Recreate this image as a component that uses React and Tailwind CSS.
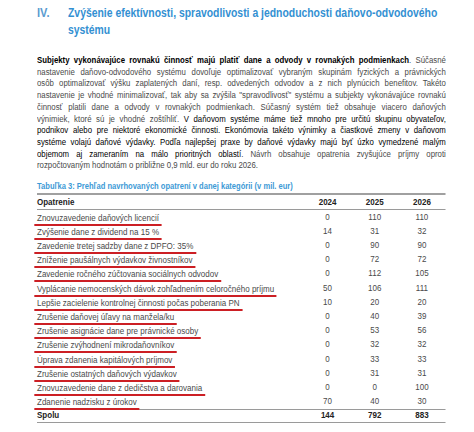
import React from "react";

const rows = [
  ["Znovuzavedenie daňových licencií", "0", "110", "110"],
  ["Zvýšenie dane z dividend na 15 %", "14", "31", "32"],
  ["Zavedenie tretej sadzby dane z DPFO: 35%", "0", "90", "90"],
  ["Zníženie paušálnych výdavkov živnostníkov", "0", "72", "72"],
  ["Zavedenie ročného zúčtovania sociálnych odvodov", "0", "112", "105"],
  ["Vyplácanie nemocenských dávok zohľadnením celoročného príjmu", "50", "106", "111"],
  ["Lepšie zacielenie kontrolnej činnosti počas poberania PN", "10", "20", "20"],
  ["Zrušenie daňovej úľavy na manžela/ku", "0", "40", "39"],
  ["Zrušenie asignácie dane pre právnické osoby", "0", "53", "56"],
  ["Zrušenie zvýhodnení mikrodaňovníkov", "0", "32", "32"],
  ["Úprava zdanenia kapitálových príjmov", "0", "33", "33"],
  ["Zrušenie ostatných daňových výdavkov", "0", "31", "31"],
  ["Znovuzavedenie dane z dedičstva a darovania", "0", "0", "100"],
  ["Zdanenie nadzisku z úrokov", "70", "40", "30"],
];

const font = { fontFamily: '"Liberation Sans", Arial, sans-serif' };

// the source pdf uses a narrow face, so text blocks are squeezed horizontally
const Line = ({ children, last }) => (
  <div className={"whitespace-nowrap " + (last ? "text-left" : "text-justify [text-align-last:justify]")}>
    {children}
  </div>
);

const Num = ({ children, bold }) => (
  <div className={"w-[53px] text-center " + (bold ? "font-bold" : "")}>{children}</div>
);

export default function App() {
  return (
    <div className="w-[474px] h-[432px] bg-white overflow-hidden text-[#4a4a4a]" style={font}>
      <div className="flex pt-[4px] pl-[37px] text-[13px] leading-[17px] font-bold">
        <div className="w-[31px] shrink-0 text-[#5a9bd0] origin-left scale-x-[0.85]">IV.</div>
        <div className="text-[#3390d2] whitespace-nowrap origin-left scale-x-[0.80]">
          Zvýšenie efektívnosti, spravodlivosti a jednoduchosti daňovo-odvodového
          <br />
          systému
        </div>
      </div>

      <div className="mt-[17px] ml-[37px] w-[481px] origin-left scale-x-[0.85] text-[9.2px] leading-[11.7px]">
        <Line>
          <b className="text-black">Subjekty vykonávajúce rovnakú činnosť majú platiť dane a odvody v rovnakých podmienkach</b>. Súčasné
        </Line>
        <Line>nastavenie daňovo-odvodového systému dovoľuje optimalizovať vybraným skupinám fyzických a právnických</Line>
        <Line>osôb optimalizovať výšku zaplatených daní, resp. odvedených odvodov a z nich plynúcich benefitov. Takéto</Line>
        <Line>nastavenie je vhodné minimalizovať, tak aby sa zvýšila "spravodlivosť" systému a subjekty vykonávajúce rovnakú</Line>
        <Line>činnosť platili dane a odvody v rovnakých podmienkach. Súčasný systém tiež obsahuje viacero daňových</Line>
        <Line>
          výnimiek, ktoré sú je vhodné zoštíhliť. <span className="text-black">V daňovom systéme máme tiež mnoho pre určitú skupinu obyvateľov,</span>
        </Line>
        <Line>
          <span className="text-black">podnikov alebo pre niektoré ekonomické činnosti. Ekonómovia takéto výnimky a čiastkové zmeny v daňovom</span>
        </Line>
        <Line>
          <span className="text-black">systéme volajú daňové výdavky. Podľa najlepšej praxe by daňové výdavky majú byť úzko vymedzené malým</span>
        </Line>
        <Line>
          <span className="text-black">objemom aj zameraním na málo prioritných oblastí</span>. Návrh obsahuje opatrenia zvyšujúce príjmy oproti
        </Line>
        <Line last>rozpočtovaným hodnotám o približne 0,9 mld. eur do roku 2026.</Line>
      </div>

      <div className="ml-[37px] w-[459px] mt-[8px] origin-left scale-x-[0.89]">
        <div className="text-[8.5px] leading-[12px] font-bold text-[#3d9ad6] border-b-2 border-[#a0a0a0] pb-[1px]">
          Tabuľka 3: Prehľad navrhovaných opatrení v danej kategórii (v mil. eur)
        </div>
        <div className="flex h-[15px] items-center text-[9px] leading-[11px] font-bold text-[#222] border-b border-[#9a9a9a]">
          <div className="flex-1">Opatrenie</div>
          <Num>2024</Num>
          <Num>2025</Num>
          <Num>2026</Num>
        </div>
        {rows.map((r) => (
          <div key={r[0]} className="flex h-[14.2px] items-center text-[9px] leading-[11px] text-[#4a4a4a]">
            <div className="flex-1">
              <span className="inline-block -ml-[3px] pl-[3px] pr-[3px] border-b-2 border-[#cc1f24] translate-y-[2px]">{r[0]}</span>
            </div>
            <Num>{r[1]}</Num>
            <Num>{r[2]}</Num>
            <Num>{r[3]}</Num>
          </div>
        ))}
        <div className="flex h-[14px] items-center text-[9px] leading-[11px] text-[#222] border-t border-b border-[#9a9a9a]">
          <div className="flex-1 font-bold">Spolu</div>
          <Num bold>144</Num>
          <Num bold>792</Num>
          <Num bold>883</Num>
        </div>
      </div>
    </div>
  );
}
